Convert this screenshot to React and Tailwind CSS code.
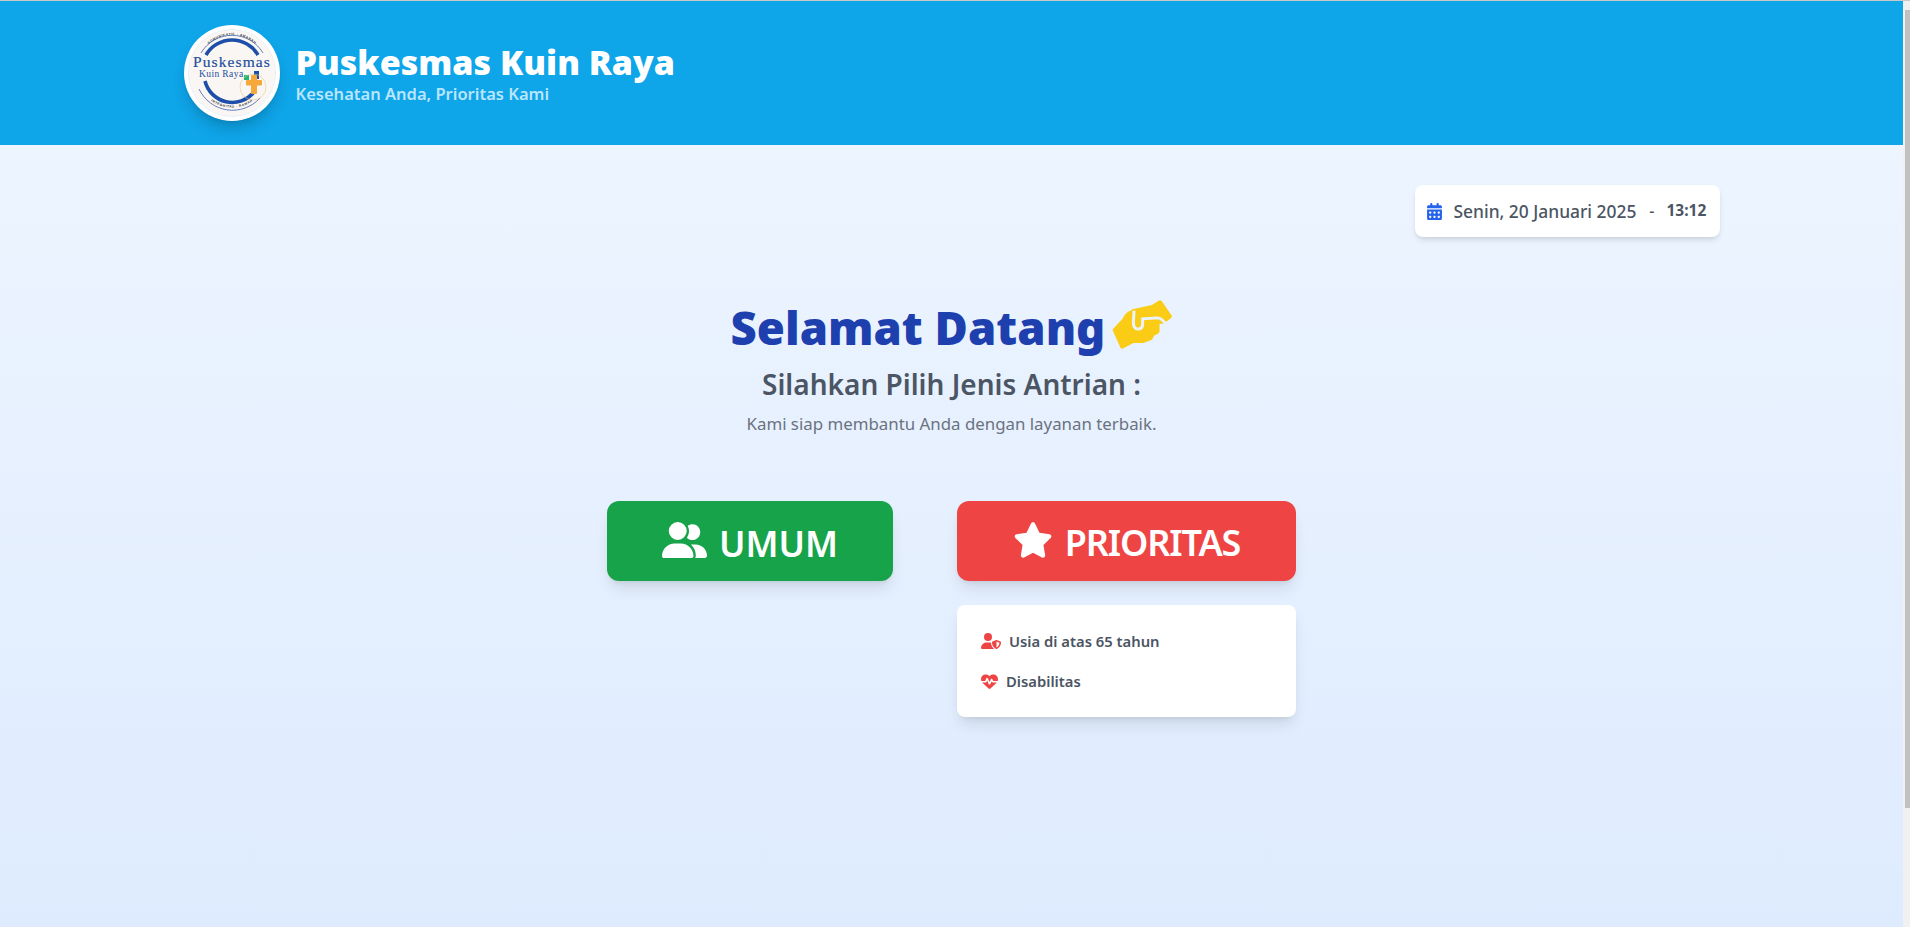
import React from "react";
import { FaCalendarDays, FaUserGroup, FaStar, FaUserShield, FaHeartPulse } from "react-icons/fa6";

const font = { fontFamily: '"Noto Sans", "Open Sans", sans-serif' };

function Logo() {
  return (
    <div className="w-24 h-24 shrink-0 rounded-full bg-white shadow-[0_10px_15px_-3px_rgba(0,0,0,0.18),0_4px_6px_-4px_rgba(0,0,0,0.12)] flex items-center justify-center">
      <svg viewBox="0 0 96 96" className="w-24 h-24">
        <circle cx="48" cy="48" r="43.5" fill="#faf6f4" stroke="#bfe3f5" strokeWidth="0.6" strokeDasharray="1 0.6" />
        <defs>
          <path id="arcTop" d="M 14 44 A 34 34 0 0 1 82 44" />
          <path id="arcBot" d="M 14 56 A 35 35 0 0 0 82 56" />
        </defs>
        <path d="M 17 28 A 36 36 0 0 1 79 28" fill="none" stroke="#1e4fa8" strokeWidth="0.7" />
        <path d="M 22 30 A 30 30 0 0 1 74 30" fill="none" stroke="#1e4fa8" strokeWidth="3.6" />
        <path d="M 21 56 A 28 28 0 0 0 70 67" fill="none" stroke="#1e4fa8" strokeWidth="3.6" />
        <path d="M 15 64 A 37 37 0 0 0 76 73" fill="none" stroke="#1e4fa8" strokeWidth="0.7" />
        <text fontSize="3.2" fill="#333" fontFamily="Liberation Sans" letterSpacing="0.6" fontWeight="700">
          <textPath href="#arcTop" startOffset="50%" textAnchor="middle">KOMUNIKATIF · AMANAH</textPath>
        </text>
        <text fontSize="3.2" fill="#333" fontFamily="Liberation Sans" letterSpacing="0.6" fontWeight="700">
          <textPath href="#arcBot" startOffset="50%" textAnchor="middle">INTEGRITAS · RAMAH</textPath>
        </text>
        <text x="48" y="41.5" textAnchor="middle" fontSize="15.5" fontFamily="Liberation Serif" fill="#1d4f9c" stroke="#1d4f9c" strokeWidth="0.2" letterSpacing="1.1">Puskesmas</text>
        <text x="15" y="52" fontSize="9.5" fontFamily="Liberation Serif" fill="#1d4f9c" fontWeight="400" letterSpacing="0.4">Kuin Raya</text>
        <rect x="70" y="46" width="5" height="8" fill="#1e4fa8" />
        <rect x="60" y="50" width="5" height="5" fill="#22b573" />
        <circle cx="69" cy="62" r="13" fill="none" stroke="#e8c98a" strokeWidth="0.6" />
        <rect x="62" y="55" width="16" height="5.5" fill="#f7a83a" rx="1" />
        <rect x="67" y="50" width="6" height="19" fill="#f7a83a" rx="1" />
      </svg>
    </div>
  );
}

function Handshake() {
  return (
    <svg viewBox="0 0 180 148" className="w-[60px] h-[49px] ml-[7px] mb-[5px] shrink-0">
      <path
        d="M2 93 Q0 90 3 87 L32 56 Q40 38 55 32 Q62 26 72 26 L120 15 L140 2 Q146 -1 150 4 L179 46 Q182 51 177 55 L155 72 L143 72 L143 93 Q143 102 132 105 L126 108 Q122 122 110 124 L94 130 L64 130 L34 146 Q28 149 25 144 Z"
        fill="#facc15"
      />
      <path
        d="M66 32 L64 68 Q64 87 78 88 Q92 88 92 72 L92 57 L136 54 Q150 54 162 74"
        fill="none"
        stroke="#ebf3fe"
        strokeWidth="9"
        strokeLinecap="butt"
      />
    </svg>
  );
}

function Scrollbar() {
  return (
    <div className="w-[7px] shrink-0 bg-[#f1f1f1] pt-[9px] pl-[2px]">
      <div className="h-[798px] w-[5px] bg-[#c1c1c1]" />
    </div>
  );
}

export default function App() {
  return (
    <div className="h-[927px] w-full overflow-hidden flex flex-col" style={font}>
      <div className="h-px bg-[#c9c9c9] shrink-0" />
      <div className="flex flex-1 min-h-0">
        <div className="flex-1 min-w-0 flex flex-col bg-[linear-gradient(to_bottom,#eff6ff,#deebfe)]">
          <header className="bg-[#0ea5e9] py-6 shrink-0">
            <div className="w-[1536px] mx-auto flex items-center gap-4">
              <Logo />
              <div className="pb-[5px]">
                <h1 className="text-[34px] leading-[46px] font-black text-white">Puskesmas Kuin Raya</h1>
                <p className="text-[16.5px] leading-[18px] font-semibold text-[#bae6fd]">Kesehatan Anda, Prioritas Kami</p>
              </div>
            </div>
          </header>
          <main className="w-[1536px] mx-auto pt-10">
            <div className="flex justify-end">
              <div className="h-[52px] w-[305px] bg-white rounded-lg shadow-md flex items-center pl-[11px] text-[#4b5563]">
                <FaCalendarDays className="text-[#2563eb] text-[17px] mr-[11px]" />
                <span className="text-[17.4px] font-medium">Senin, 20 Januari 2025</span>
                <span className="ml-[13px] mr-[12px] text-[16px] font-medium">-</span>
                <span className="text-[15.5px] font-bold">13:12</span>
              </div>
            </div>
            <div className="mt-[61px] flex items-center justify-center h-[58px]">
              <h2 className="text-[45.5px] leading-[58px] font-black text-[#1e40af]">Selamat Datang</h2>
              <Handshake />
            </div>
            <p className="text-center text-[28px] leading-[36px] font-semibold text-[#4b5563] mt-[10px]">Silahkan Pilih Jenis Antrian :</p>
            <p className="text-center text-[16.85px] leading-[24px] text-[#6b7280] mt-[10px]">Kami siap membantu Anda dengan layanan terbaik.</p>
            <div className="mt-[65px] flex justify-center gap-16">
              <div className="w-[286px] h-20 bg-[#16a34a] rounded-xl shadow-lg flex items-center justify-center gap-3 text-white">
                <FaUserGroup className="w-[45px] h-[36px] mb-[2px]" />
                <span className="text-[35.5px] leading-[44px] font-semibold pt-[3px]">UMUM</span>
              </div>
              <div className="w-[339px]">
                <div className="h-20 bg-[#ef4444] rounded-xl shadow-lg flex items-center justify-center gap-3 text-white">
                  <FaStar className="w-[40px] h-[36px] mb-[2px]" />
                  <span className="text-[36px] leading-[44px] font-semibold tracking-[-1.1px] pt-[3px]">PRIORITAS</span>
                </div>
                <div className="mt-6 h-[112px] bg-white rounded-lg shadow-lg pl-6 flex flex-col justify-center gap-[18px] text-[#4b5563] text-[14.8px] font-semibold">
                  <div className="flex items-center gap-2 h-[22px]">
                    <FaUserShield className="text-[#ef4444] w-[20px] h-[16px]" />
                    <span>Usia di atas 65 tahun</span>
                  </div>
                  <div className="flex items-center gap-2 h-[22px]">
                    <FaHeartPulse className="text-[#ef4444] text-[17px]" />
                    <span>Disabilitas</span>
                  </div>
                </div>
              </div>
            </div>
          </main>
        </div>
        <Scrollbar />
      </div>
    </div>
  );
}
